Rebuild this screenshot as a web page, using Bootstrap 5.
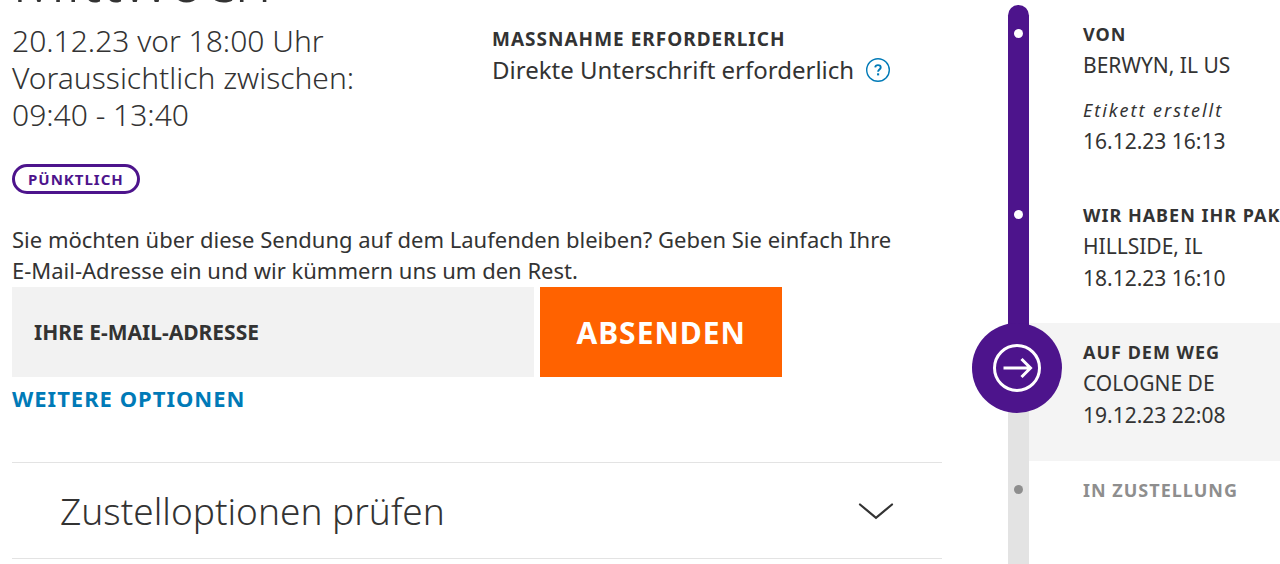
<!DOCTYPE html>
<html lang="de">
<head>
<meta charset="utf-8">
<meta name="viewport" content="width=device-width, initial-scale=1">
<title>Sendungsverfolgung</title>
<link href="https://cdn.jsdelivr.net/npm/bootstrap@5.3.0/dist/css/bootstrap.min.css" rel="stylesheet">
<style>
  :root { --purple: #4d148c; --ink: #333; --blue: #007ab7; --orange: #ff6200; }
  body { font-family: "Noto Sans", "Open Sans", sans-serif; font-size: 22px; line-height: 31px; color: var(--ink); overflow-x: hidden; }
  .pane { padding: 0 18px 0 12px; }
  .day { font-size: 62px; line-height: 64px; font-weight: 300; margin: -54px 0 12px; }
  .eta { font-size: 30px; line-height: 37px; font-weight: 300; }
  .caps { font-size: 18px; font-weight: 700; letter-spacing: 1px; text-transform: uppercase; }
  .status { font-size: 15px; line-height: 24px; font-weight: 700; letter-spacing: 1px; color: var(--purple); border: 3px solid var(--purple); padding: 0 13px; margin-top: 31px; }
  .intro { margin: 30px 0 1px; }
  .action { padding-top: 24px; }
  .action .caps { font-size: 19px; line-height: 31px; }
  .demand { font-size: 24px; line-height: 29px; gap: 12px; }
  .signup { max-width: 770px; gap: 6px; }
  .signup .form-control, .signup .form-control:focus { background: #f2f2f2; color: var(--ink); padding: 0 22px; height: 90px; font-size: 21px; font-weight: 700; }
  .signup .form-control::placeholder { color: var(--ink); opacity: 1; }
  .signup .btn { --bs-btn-color: #fff; --bs-btn-bg: var(--orange); --bs-btn-hover-color: #fff; --bs-btn-hover-bg: #e65800; padding: 0 36px; font-size: 30px; font-weight: 700; letter-spacing: 1px; }
  .more { font-size: 22px; font-weight: 700; letter-spacing: 1px; color: var(--blue); margin: 6px 0 48px; }
  .options { border: solid #e3e3e3; border-width: 1px 0; border-radius: 0; color: var(--ink); font-size: 37px; line-height: 55px; font-weight: 300; padding: 20px 48px; }
  .track { padding: 5px 0 0 12px; }
  .step { position: relative; }
  .rail { width: 57px; padding-left: 36px; flex: none; }
  .bar { background: var(--purple); padding-top: 24px; }
  .step:first-child .bar { border-radius: 11px 11px 0 0; }
  .bar::before { content: ""; display: block; width: 9px; height: 9px; margin: 0 auto; border-radius: 50%; background: #fff; }
  .info { padding: 14px 0 29px 54px; white-space: nowrap; }
  .info .caps { line-height: 30px; }
  .place, .stamp { font-size: 21px; line-height: 32px; }
  .note { font-size: 18px; line-height: 30px; letter-spacing: 2px; margin-top: 14px; }
  .current .info { background: #f4f4f4; padding-bottom: 30px; }
  .current .bar, .pending .bar { background: #e3e3e3; }
  .current .bar::before { visibility: hidden; }
  .pending .info { color: #8e8e8e; padding-bottom: 60px; }
  .pending .bar::before { background: #8e8e8e; }
</style>
</head>
<body>
<div class="container-fluid px-0 overflow-hidden">
  <div class="row gx-0">
    <main class="col-9">
      <div class="row gx-0">
        <div class="col-6 pane">
          <h1 class="day">Mittwoch</h1>
          <div class="eta">20.12.23 vor 18:00 Uhr<br>Voraussichtlich zwischen:<br>09:40 - 13:40</div>
        </div>
        <div class="col-6 pane action">
          <h2 class="caps mb-0">Massnahme erforderlich</h2>
          <div class="demand d-flex align-items-center text-nowrap">
            <span>Direkte Unterschrift erforderlich</span>
            <a href="#" aria-label="Hilfe" class="d-flex"><svg width="24" height="24" viewBox="1 1 24 24" fill="none" stroke="#007ab7"><circle cx="13" cy="13" r="11.3" stroke-width="1.4"/><path d="M10.2 10.4c.2-1.6 1.3-2.3 2.8-2.3 1.6 0 2.7.9 2.7 2.3 0 2-2.6 2.2-2.6 4.3" stroke-width="1.9"/><path d="M13.1 16.3v2.1" stroke-width="2.1"/></svg></a>
          </div>
        </div>
      </div>
      <div class="pane">
        <div class="d-flex"><span class="status rounded-pill">PÜNKTLICH</span></div>
        <label for="mail" class="intro d-block">Sie möchten über diese Sendung auf dem Laufenden bleiben? Geben Sie einfach Ihre <span class="text-nowrap">E-Mail-Adresse</span> ein und wir kümmern uns um den Rest.</label>
        <form class="signup d-flex">
          <input id="mail" type="email" class="form-control border-0 rounded-0 flex-fill" placeholder="IHRE E-MAIL-ADRESSE">
          <button type="submit" class="btn border-0 rounded-0">ABSENDEN</button>
        </form>
        <div class="d-flex"><a href="#" class="more text-decoration-none">WEITERE OPTIONEN</a></div>
        <button type="button" class="options btn w-100 d-flex justify-content-between align-items-center">
          <span>Zustelloptionen prüfen</span>
          <svg width="36" height="18" viewBox="0 0 36 18" fill="none" stroke="#333" stroke-width="2.2" stroke-linecap="round"><path d="M2 2.500l16 13.300L34 2.500"/></svg>
        </button>
      </div>
    </main>
    <aside class="col-3">
      <ol class="track list-unstyled mb-0">
        <li class="step d-flex">
          <div class="rail d-flex"><div class="bar w-100"></div></div>
          <div class="info flex-fill">
            <div class="caps">Von</div>
            <div class="place">BERWYN, IL US</div>
            <div class="note fst-italic">Etikett erstellt</div>
            <div class="stamp">16.12.23 16:13</div>
          </div>
        </li>
        <li class="step d-flex">
          <div class="rail d-flex"><div class="bar w-100"></div></div>
          <div class="info flex-fill">
            <div class="caps">Wir haben Ihr Paket</div>
            <div class="place">HILLSIDE, IL</div>
            <div class="stamp">18.12.23 16:10</div>
          </div>
        </li>
        <li class="step current d-flex">
          <div class="rail d-flex"><div class="bar w-100"></div></div>
          <svg class="position-absolute top-0 start-0" width="90" height="90" viewBox="0 0 90 90" fill="none" stroke="#fff" stroke-width="3"><path d="M36 0h21v10H36z" fill="#4d148c" stroke="none"/><circle cx="45" cy="45" r="45" fill="#4d148c" stroke="none"/><circle cx="45" cy="45" r="22.5"/><path d="M31.5 45h27M49.500 36l9 9-9 9"/></svg>
          <div class="info flex-fill">
            <div class="caps">Auf dem Weg</div>
            <div class="place">COLOGNE DE</div>
            <div class="stamp">19.12.23 22:08</div>
          </div>
        </li>
        <li class="step pending d-flex">
          <div class="rail d-flex"><div class="bar w-100"></div></div>
          <div class="info flex-fill">
            <div class="caps">In Zustellung</div>
          </div>
        </li>
      </ol>
    </aside>
  </div>
</div>
<script src="https://cdn.jsdelivr.net/npm/bootstrap@5.3.0/dist/js/bootstrap.bundle.min.js"></script>
</body>
</html>
